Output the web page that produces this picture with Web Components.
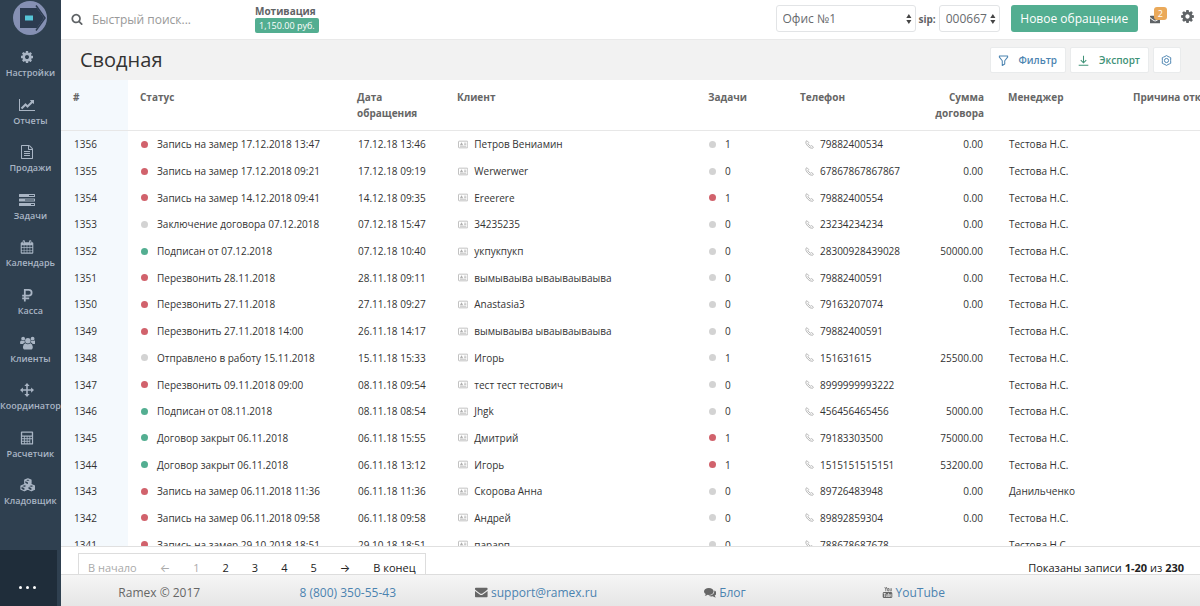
<!DOCTYPE html>
<html lang="ru">
<head>
<meta charset="utf-8">
<title>Сводная</title>
<style>
  html, body { height: 100%; margin: 0; }
  body {
    font-family: "Open Sans", "Noto Sans", "Liberation Sans", sans-serif;
    font-size: 10px;
    color: #333;
    background: #fff;
    --navy: #2f4050;
    --green: #53ae91;
    --blue: #4b83b0;
    --red: #d1626c;
    --grey: #d3d3d3;
    --line: #e7e7e7;
  }
</style>
</head>
<body>
<crm-app></crm-app>

<script>
// ============================================================
// Иконки: <crm-icon name="cog">. Размер задаётся через font-size.
// ============================================================
const ICONS = {
  cog: ['0 0 1792 1792', '<path d="M1152 896q0-106-75-181t-181-75-181 75-75 181 75 181 181 75 181-75 75-181zm512-109v222q0 12-8 23t-20 13l-185 28q-19 54-39 91 35 50 107 138 10 12 10 25t-9 23q-27 37-99 108t-94 71q-12 0-26-9l-138-108q-44 23-91 38-16 136-29 186-7 28-36 28h-222q-14 0-24.5-8.5t-11.5-21.5l-28-184q-49-16-90-37l-141 107q-10 9-25 9-14 0-25-11-126-114-165-168-7-10-7-23 0-12 8-23 15-21 51-66.5t54-70.5q-27-50-41-99l-183-27q-13-2-21-12.5t-8-23.5v-222q0-12 8-23t19-13l186-28q14-46 39-92-40-57-107-138-10-12-10-24 0-10 9-23 26-36 98.5-107.5t94.5-71.5q13 0 26 10l138 107q44-23 91-38 16-136 29-186 7-28 36-28h222q14 0 24.5 8.5t11.5 21.5l28 184q49 16 90 37l142-107q9-9 24-9 13 0 25 10 129 119 165 170 7 8 7 22 0 12-8 23-15 21-51 66.5t-54 70.5q26 50 41 98l183 28q13 2 21 12.5t8 23.5z"/>'],
  chart: ['0 0 2048 1792', '<path d="M2048 1536v128h-2048v-1536h128v1408h1920zm-128-1248v435q0 21-19.5 29.5t-35.5-7.5l-121-121-633 633q-10 10-23 10t-23-10l-233-233-416 416-192-192 585-585q10-10 23-10t23 10l233 233 464-464-121-121q-16-16-7.5-35.5t29.5-19.5h435q14 0 23 9t9 23z"/>'],
  file: ['0 0 1792 1792', '<path d="M1596 380q28 28 48 76t20 88v1152q0 40-28 68t-68 28h-1344q-40 0-68-28t-28-68v-1600q0-40 28-68t68-28h896q40 0 88 20t76 48zm-444-244v376h376q-10-29-22-41l-313-313q-12-12-41-22zm384 1528v-1024h-416q-40 0-68-28t-28-68v-416h-768v1536h1280zm-1024-864q0-14 9-23t23-9h704q14 0 23 9t9 23v64q0 14-9 23t-23 9h-704q-14 0-23-9t-9-23v-64zm736 224q14 0 23 9t9 23v64q0 14-9 23t-23 9h-704q-14 0-23-9t-9-23v-64q0-14 9-23t23-9h704zm0 256q14 0 23 9t9 23v64q0 14-9 23t-23 9h-704q-14 0-23-9t-9-23v-64q0-14 9-23t23-9h704z"/>'],
  search: ['0 0 1792 1792', '<path d="M1216 832q0-185-131.5-316.5t-316.5-131.5-316.5 131.5-131.5 316.5 131.5 316.5 316.5 131.5 316.5-131.5 131.5-316.5zm512 832q0 52-38 90t-90 38q-54 0-90-38l-343-342q-179 124-399 124-143 0-273.5-55.5t-225-150-150-225-55.5-273.5 55.5-273.5 150-225 225-150 273.5-55.5 273.5 55.5 225 150 150 225 55.5 273.5q0 220-124 399l343 343q37 37 37 90z"/>'],
  tasks: ['0 0 16 14', '<path fill-rule="evenodd" d="M.5 1h15q.5 0 .5.5v2q0 .5-.5.5H.5Q0 4 0 3.500v-2Q0 1 .5 1zM10 2v1h5V2zM.5 5.500h15q.5 0 .5.5v2q0 .5-.5.5H.5Q0 8.500 0 8V6q0-.5.5-.5zM6 6.500v1h9v-1zM.5 10h15q.5 0 .5.500v2q0 .5-.5.5H.5q-.5 0-.5-.5v-2q0-.5.5-.5zM12 11v1h3v-1z"/>'],
  calendar: ['0 0 16 16', '<path fill-rule="evenodd" d="M2 2.500h1V1.300Q3 .3 4 .3h.6q1 0 1 1v1.200h4.800V1.300q0-1 1-1h.6q1 0 1 1v1.200h1q1.200 0 1.200 1.200v10.800q0 1.200-1.200 1.200H2q-1.200 0-1.200-1.200V3.700Q.8 2.500 2 2.500zM2 6v2.300h2.300V6zM5 6v2.300h2.600V6zM8.400 6v2.300H11V6zM11.700 6v2.300H14V6zM2 9v2.300h2.300V9zM5 9v2.300h2.600V9zM8.400 9v2.300H11V9zM11.700 9v2.300H14V9zM2 12v2.300h2.300V12zM5 12v2.300h2.600V12zM8.400 12v2.300H11V12zM11.700 12v2.300H14V12zM4 1.300v2.400h.6V1.300zM11.400 1.300v2.400h.6V1.300z"/>'],
  ruble: ['0 0 16 16', '<path fill="none" stroke="currentColor" stroke-width="2" d="M5.500 15.500V2H10q3.300 0 3.300 3.300T10 8.600H2.500M2.500 11.800h8"/>'],
  users: ['0 0 18 16', '<circle cx="9" cy="5.500" r="3.100"/><circle cx="3.600" cy="3" r="2.200"/><circle cx="14.400" cy="3" r="2.200"/><path d="M4.200 15q-1-.8-.8-2.600.3-3.600 2.700-4.200Q9 10.500 11.900 8.200q2.400.6 2.700 4.200.2 1.800-.8 2.600-.6.500-1.300.5h-7q-.7 0-1.300-.5zM0 8.200Q0 5.300 1.400 5q2 1.400 3.800.3.100 1.400.8 2.200-1.500.1-2.500 1.500H1Q0 9 0 8.200zM18 8.200Q18 5.300 16.600 5q-2 1.400-3.800.3-.1 1.400-.8 2.200 1.500.1 2.500 1.500H17q1 0 1-.8z"/>'],
  arrows: ['0 0 16 16', '<path d="M8 0l3 3.300H8.900v3.800h3.800V5L16 8l-3.300 3V8.900H8.900v3.800H11L8 16l-3-3.300h2.100V8.900H3.300V11L0 8l3.300-3v2.100h3.800V3.300H5z"/>'],
  calc: ['0 0 16 16', '<path fill-rule="evenodd" d="M2 .5h12q1 0 1 1v13q0 1-1 1H2q-1 0-1-1v-13q0-1 1-1zM2.500 2v3h11V2zM2.300 6.500v1.800h2.200V6.500zM5.500 6.500v1.800h2.200V6.500zM8.600 6.500v1.800h2.200V6.500zM11.700 6.500v1.800h2V6.500zM2.300 9.400v1.800h2.200V9.400zM5.500 9.400v1.800h2.200V9.400zM8.600 9.400v1.800h2.200V9.400zM2.300 12.300v1.800h2.200v-1.800zM5.500 12.300v1.800h2.200v-1.800zM8.600 12.300v1.800h2.200v-1.800zM11.700 9.400v4.700h2V9.400z"/>'],
  cubes: ['0 0 18 16', '<g fill="none" stroke="currentColor" stroke-width="1.400" stroke-linejoin="round"><path d="M9 1l3.600 1.500v3.700L9 7.800 5.400 6.200V2.500zM5.400 2.600L9 4.200l3.600-1.600M5 7.500l3.700 1.600v3.800L5 14.600l-3.900-1.700V9.100zM1.100 9.200L5 10.800l3.700-1.600M13 7.500l3.900 1.600v3.800L13 14.600l-3.900-1.700V9.100zM9.100 9.200l3.900 1.600 3.900-1.600"/></g><path d="M9 4.200l3.600-1.600v3.600L9 7.800zM5 10.800l3.700-1.600v3.700L5 14.600zM13 10.800l3.900-1.600v3.700L13 14.600z"/>'],
  envelope: ['0 0 16 14', '<path d="M0 3.200V2q0-1 1-1h14q1 0 1 1v1.200Q14 5 9.400 8.200q-1.400 1-2.800 0Q2 5 0 3.200zM0 5q2 1.700 6 4.400 2 1.300 4 0Q14 6.700 16 5v7q0 1-1 1H1q-1 0-1-1z"/>'],
  comments: ['0 0 18 16', '<path d="M7 1.500c3.900 0 7 2.200 7 5s-3.100 5-7 5q-.9 0-1.700-.2Q3.500 12.600 1.300 12.800q-.5-.1 0-.6 1-.9 1.200-2Q0 8.800 0 6.500c0-2.800 3.100-5 7-5z"/><path d="M15.200 5q2.800 1.500 2.800 3.900 0 2.200-2.400 3.600.2 1.100 1.200 2 .5.500 0 .6-2.300-.2-4-1.500-3.600.6-6.200-1.200Q15 12.300 15.200 5z"/>'],
  youtube: ['0 0 16 16', '<path d="M3.500 0h1.200l.8 2.500L6.300 0h1.200L6.100 3.800V6.300H5V3.800zM9 1.600q1.500 0 1.500 1.500v1.800q0 1.500-1.500 1.500T7.500 4.900V3.100Q7.500 1.600 9 1.600zm0 1q-.5 0-.5.500v1.800q0 .6.500.6t.5-.6V3.100q0-.5-.5-.5zM11.200 1.700h1v3.600q.4.300.8-.2V1.700h1v4.600h-1v-.5q-1.800 1.400-1.800-.2z"/><path fill-rule="evenodd" d="M3 7.300h10q2 0 2 2V14q0 2-2 2H3q-2 0-2-2V9.300q0-2 2-2zM2.300 8.700v1h1.100v4.900h1V9.700h1.100v-1zM5.500 10.400v3.400q.2 1.400 1.700.4v.4h.9v-4.200h-.9v3.200q-.5.500-.8.100v-3.300zM9 8.700v5.900h.9v-.4q1.500 1 1.800-.6v-2q-.3-1.800-1.800-.8V8.700zM9.900 11.700q.5-.6.900 0v1.800q-.4.500-.9 0zM12.300 11.600v2q.3 1.300 1.300 1.200V9.900q-1 0-1.300 1.700z"/>'],
  filter: ['0 0 16 16', '<path fill="none" stroke="currentColor" stroke-width="1.500" stroke-linejoin="round" d="M2 1.500h12v1.600L9.800 8.300v4.900l-3.600 2V8.300L2 3.100z"/>'],
  download: ['0 0 16 16', '<path fill="none" stroke="currentColor" stroke-width="1.500" d="M8 1v10M4 7.300l4 4 4-4M1 14.800h14"/>'],
  hexnut: ['0 0 16 16', '<g fill="none" stroke="currentColor" stroke-width="1.400" stroke-linejoin="round"><path d="M8 .8l2.200 1.400 2.200.9 1.800.9-.2 4 .2 4-1.800.9-2.200.9L8 15.200l-2.200-1.400-2.200-.9-1.800-.9.2-4-.2-4 1.800-.9 2.200-.9z"/><circle cx="8" cy="8" r="3"/></g>'],
  card: ['0 0 16 14', '<g fill="none" stroke="currentColor" stroke-width="1.200"><rect x=".8" y="1.800" width="14.400" height="10.400" rx="1"/><path d="M9.500 5H13M9.500 7.200H13M3 9.700h10"/></g><path d="M3 8.300q0-1.600 1.400-1.900Q3.800 4 5.500 4t1.100 2.400Q8 6.700 8 8.300z"/>'],
  phone: ['0 0 16 16', '<path fill="none" stroke="currentColor" stroke-width="1.600" stroke-linejoin="round" d="M3.600 1.200L1.500 2.700q-.8 3.500 3.300 8t8.500 4q1-.5 1.700-2.200L11.700 10l-2 1Q6.500 9.300 5.300 6.200l1.300-1.600z"/>'],
  updown: ['0 0 8 14', '<path d="M4 0l3.600 5.500H.4zM4 14L.4 8.500h7.200z"/>']
};

class CrmIcon extends HTMLElement {
  connectedCallback() {
    const [box, body] = ICONS[this.getAttribute('name')];
    this.attachShadow({ mode: 'open' }).innerHTML = `
      <style>
        :host { display: inline-flex; flex: none; }
        svg { display: block; height: 1em; width: auto; fill: currentColor; }
      </style>
      <svg viewBox="${box}" aria-hidden="true">${body}</svg>`;
  }
}
customElements.define('crm-icon', CrmIcon);

// ============================================================
// Боковое меню
// ============================================================
class CrmSidebar extends HTMLElement {
  connectedCallback() {
    const items = [
      ['cog', 'Настройки'], ['chart', 'Отчеты'], ['file', 'Продажи'],
      ['tasks', 'Задачи'], ['calendar', 'Календарь'], ['ruble', 'Касса'],
      ['users', 'Клиенты'], ['arrows', 'Координатор'],
      ['calc', 'Расчетчик'], ['cubes', 'Кладовщик']
    ];
    this.attachShadow({ mode: 'open' }).innerHTML = `
      <style>
        :host {
          display: flex;
          flex-direction: column;
          width: 61px;
          background: var(--navy);
          color: #a9b5c4;
          overflow: hidden;
        }
        .logo { display: flex; justify-content: center; height: 40px; padding-right: 2px; }
        .logo svg { width: 36px; height: 36px; }
        nav {
          flex: 1;
          display: grid;
          grid-auto-rows: 1fr;
          padding: 10px 2px 24px 0;
        }
        a {
          display: flex;
          flex-direction: column;
          align-items: center;
          gap: 2px;
          color: inherit;
          text-decoration: none;
          font-size: 9px;
          font-weight: 600;
          line-height: 14px;
          white-space: nowrap;
        }
        crm-icon { font-size: 14px; padding-right: 6px; }
        button {
          height: 56px;
          margin-right: 4px;
          border: 0;
          padding: 18px 2px 0 0;
          background: #1f2d3a;
          display: flex;
          align-items: center;
          justify-content: center;
          gap: 4px;
        }
        i { width: 3px; height: 3px; border-radius: 50%; background: #fff; }
      </style>
      <div class="logo">
        <svg viewBox="0 0 36 36" role="img" aria-label="Ramex">
          <circle cx="18" cy="18" r="17" fill="#8590b3"/>
          <path d="M8 8h17l7 10-7 10H8z" fill="#2c3b50"/>
          <path d="M24 5.500L33 18 24 30.500" fill="none" stroke="#2c3b50" stroke-width="1.500"/>
          <path d="M13 15.500h8v5h-8z" fill="#56c5d8"/>
        </svg>
      </div>
      <nav>${items.map(([icon, text]) => `
        <a href="#"><crm-icon name="${icon}"></crm-icon><span>${text}</span></a>`).join('')}
      </nav>
      <button type="button" aria-label="Ещё"><i></i><i></i><i></i></button>`;
  }
}
customElements.define('crm-sidebar', CrmSidebar);

// Выпадающий список со стрелками; значение передаётся атрибутом value
class CrmSelect extends HTMLElement {
  connectedCallback() {
    this.attachShadow({ mode: 'open' }).innerHTML = `
      <style>
        :host { display: grid; align-items: center; }
        select, crm-icon { grid-area: 1 / 1; }
        select {
          appearance: none;
          box-sizing: border-box;
          width: 100%;
          height: 27px;
          border: 1px solid #e2e4e6;
          border-radius: 3px;
          padding: 0 6px;
          background: #fff;
          color: #686b6e;
          font: inherit;
          font-size: 12px;
        }
        crm-icon {
          justify-self: end;
          margin-right: 4px;
          font-size: 10px;
          color: #444;
          pointer-events: none;
        }
      </style>
      <select aria-label="${this.getAttribute('label')}"><option>${this.getAttribute('value')}</option></select>
      <crm-icon name="updown"></crm-icon>`;
  }
}
customElements.define('crm-select', CrmSelect);

// ============================================================
// Верхняя панель
// ============================================================
class CrmTopbar extends HTMLElement {
  connectedCallback() {
    this.attachShadow({ mode: 'open' }).innerHTML = `
      <style>
        :host {
          display: flex;
          align-items: flex-start;
          box-sizing: border-box;
          height: 39px;
          padding: 5px 5px 0 10px;
          background: #fff;
          color: #5f6366;
        }
        .search { display: flex; align-items: center; gap: 9px; height: 28px; width: 184px; }
        .search crm-icon { font-size: 12px; }
        input {
          flex: 1;
          min-width: 0;
          border: 0;
          padding: 0;
          background: none;
          outline: 0;
          font: inherit;
          font-size: 12px;
          color: inherit;
        }
        input::placeholder { color: #999; opacity: 1; }
        .bonus { display: flex; flex-direction: column; align-items: flex-start; gap: 1px; }
        .bonus b { font-size: 10px; line-height: 12px; }
        .bonus span {
          padding: 0 4px;
          border-radius: 2px;
          background: var(--green);
          color: #fff;
          font-size: 9px;
          line-height: 15px;
        }
        .tools { display: flex; align-items: center; margin-left: auto; height: 27px; }
        .office { width: 140px; }
        .sip { width: 61px; }
        .tools b { padding: 0 3px; font-size: 10px; }
        button { border: 0; padding: 0; background: none; color: inherit; font: inherit; }
        .new {
          width: 127px;
          height: 27px;
          margin: 0 12px 0 11px;
          border-radius: 3px;
          background: var(--green);
          color: #fff;
          font-size: 12px;
        }
        .mail { position: relative; display: flex; padding-top: 2px; margin-right: 20px; }
        .mail crm-icon { font-size: 9px; }
        .mail span {
          position: absolute;
          left: 4px;
          bottom: 4px;
          padding: 0 4px;
          border-radius: 3px;
          background: #eaa95a;
          color: #fff;
          font-size: 9px;
          line-height: 13px;
        }
        .cog { display: flex; padding-bottom: 4px; }
        .cog crm-icon { font-size: 15px; }
      </style>
      <label class="search">
        <crm-icon name="search"></crm-icon>
        <input type="search" placeholder="Быстрый поиск..." aria-label="Быстрый поиск">
      </label>
      <div class="bonus"><b>Мотивация</b><span>1,150.00 руб.</span></div>
      <div class="tools">
        <crm-select class="office" label="Офис" value="Офис №1"></crm-select>
        <b>sip:</b>
        <crm-select class="sip" label="sip" value="000667"></crm-select>
        <button class="new" type="button">Новое обращение</button>
        <button class="mail" type="button" aria-label="Сообщения"><crm-icon name="envelope"></crm-icon><span>2</span></button>
        <button class="cog" type="button" aria-label="Параметры"><crm-icon name="cog"></crm-icon></button>
      </div>`;
  }
}
customElements.define('crm-topbar', CrmTopbar);

// Заголовок страницы, кнопки передаются через slot
class CrmHeading extends HTMLElement {
  connectedCallback() {
    this.attachShadow({ mode: 'open' }).innerHTML = `
      <style>
        :host {
          display: flex;
          align-items: center;
          justify-content: space-between;
          box-sizing: border-box;
          height: 41px;
          padding: 0 19px;
          border-top: 1px solid #e9e9e9;
          background: #f2f2f2;
        }
        h1 { margin: 0; font-size: 20px; font-weight: 400; line-height: 28px; color: #333; }
        div { display: flex; gap: 4px; }
      </style>
      <h1>${this.getAttribute('text')}</h1>
      <div><slot></slot></div>`;
  }
}
customElements.define('crm-heading', CrmHeading);

class CrmAction extends HTMLElement {
  connectedCallback() {
    this.attachShadow({ mode: 'open' }).innerHTML = `
      <style>
        :host { display: block; }
        button {
          display: flex;
          align-items: center;
          gap: 10px;
          height: 26px;
          border: 1px solid #e9ebec;
          border-radius: 2px;
          padding: 0 8px 0 7px;
          background: #fff;
          color: inherit;
          font: inherit;
          font-size: 10px;
          font-weight: 600;
        }
        crm-icon { font-size: 11px; }
      </style>
      <button type="button" aria-label="${this.getAttribute('label')}">
        <crm-icon name="${this.getAttribute('icon')}"></crm-icon><slot></slot>
      </button>`;
  }
}
customElements.define('crm-action', CrmAction);

// ============================================================
// Таблица обращений
// Строка: номер, цвет, статус, дата, клиент, цвет задач, задачи,
// телефон, сумма, менеджер
// ============================================================
const ROWS = [
  [1356, 'red', 'Запись на замер 17.12.2018 13:47', '17.12.18 13:46', 'Петров Вениамин', 'grey', 1, '79882400534', '0.00', 'Тестова Н.С.'],
  [1355, 'red', 'Запись на замер 17.12.2018 09:21', '17.12.18 09:19', 'Werwerwer', 'grey', 0, '67867867867867', '0.00', 'Тестова Н.С.'],
  [1354, 'red', 'Запись на замер 14.12.2018 09:41', '14.12.18 09:35', 'Ereerere', 'red', 1, '79882400554', '0.00', 'Тестова Н.С.'],
  [1353, 'grey', 'Заключение договора 07.12.2018', '07.12.18 15:47', '34235235', 'grey', 0, '23234234234', '0.00', 'Тестова Н.С.'],
  [1352, 'green', 'Подписан от 07.12.2018', '07.12.18 10:40', 'укпукпукп', 'grey', 0, '28300928439028', '50000.00', 'Тестова Н.С.'],
  [1351, 'red', 'Перезвонить 28.11.2018', '28.11.18 09:11', 'вымываыва ываываываыва', 'grey', 0, '79882400591', '0.00', 'Тестова Н.С.'],
  [1350, 'red', 'Перезвонить 27.11.2018', '27.11.18 09:27', 'Anastasia3', 'grey', 0, '79163207074', '0.00', 'Тестова Н.С.'],
  [1349, 'red', 'Перезвонить 27.11.2018 14:00', '26.11.18 14:17', 'вымываыва ываываываыва', 'grey', 0, '79882400591', '', 'Тестова Н.С.'],
  [1348, 'grey', 'Отправлено в работу 15.11.2018', '15.11.18 15:33', 'Игорь', 'grey', 1, '151631615', '25500.00', 'Тестова Н.С.'],
  [1347, 'red', 'Перезвонить 09.11.2018 09:00', '08.11.18 09:54', 'тест тест тестович', 'grey', 0, '8999999993222', '', 'Тестова Н.С.'],
  [1346, 'green', 'Подписан от 08.11.2018', '08.11.18 08:54', 'Jhgk', 'grey', 0, '456456465456', '5000.00', 'Тестова Н.С.'],
  [1345, 'green', 'Договор закрыт 06.11.2018', '06.11.18 15:55', 'Дмитрий', 'red', 1, '79183303500', '75000.00', 'Тестова Н.С.'],
  [1344, 'green', 'Договор закрыт 06.11.2018', '06.11.18 13:12', 'Игорь', 'red', 1, '1515151515151', '53200.00', 'Тестова Н.С.'],
  [1343, 'red', 'Запись на замер 06.11.2018 11:36', '06.11.18 11:36', 'Скорова Анна', 'grey', 0, '89726483948', '0.00', 'Данильченко'],
  [1342, 'red', 'Запись на замер 06.11.2018 09:58', '06.11.18 09:58', 'Андрей', 'grey', 0, '89892859304', '0.00', 'Тестова Н.С.'],
  [1341, 'red', 'Запись на замер 29.10.2018 18:51', '29.10.18 18:51', 'парарп', 'grey', 0, '788678687678', '', 'Тестова Н.С.']
];

class CrmTable extends HTMLElement {
  connectedCallback() {
    const rows = ROWS.map(([id, color, status, date, client, taskColor, tasks, phone, sum, manager]) => `
      <tr>
        <td>${id}</td>
        <td><span class="cell"><i class="${color}"></i>${status}</span></td>
        <td>${date}</td>
        <td><span class="cell tight"><crm-icon name="card"></crm-icon>${client}</span></td>
        <td><span class="cell"><i class="${taskColor}"></i>${tasks}</span></td>
        <td class="phone"><span class="cell tight"><crm-icon name="phone"></crm-icon>${phone}</span></td>
        <td class="sum">${sum}</td>
        <td>${manager}</td>
        <td></td>
      </tr>`).join('');

    this.attachShadow({ mode: 'open' }).innerHTML = `
      <style>
        :host { display: block; overflow: hidden; background: #fff; }
        table {
          table-layout: fixed;
          width: 100%;
          min-width: 1240px;
          height: 478px;
          border-collapse: separate;
          border-spacing: 0;
        }
        th {
          box-sizing: border-box;
          height: 51px;
          padding: 9px 12px;
          border-bottom: 1px solid var(--line);
          text-align: left;
          vertical-align: top;
          font-size: 10px;
          font-weight: 700;
          line-height: 16px;
          color: #666;
        }
        td { padding: 0 13px; line-height: 16px; white-space: nowrap; }
        tr > :first-child { background: #f4f9fd; }
        .sum { text-align: right; }
        .phone { padding-left: 17px; padding-right: 0; }
        .cell { display: flex; align-items: center; gap: 9px; }
        .tight { gap: 6px; }
        i { width: 7px; height: 7px; border-radius: 50%; }
        .red { background: var(--red); }
        .green { background: var(--green); }
        .grey { background: var(--grey); }
        crm-icon { color: #b0b0b0; font-size: 9px; }
      </style>
      <table>
        <colgroup>
          <col style="width: 67px"><col style="width: 217px"><col style="width: 100px">
          <col style="width: 251px"><col style="width: 92px"><col style="width: 118px">
          <col style="width: 90px"><col style="width: 125px"><col>
        </colgroup>
        <thead>
          <tr>
            <th>#</th><th>Статус</th><th>Дата обращения</th><th>Клиент</th><th>Задачи</th>
            <th>Телефон</th><th class="sum">Сумма договора</th><th>Менеджер</th><th>Причина отказа</th>
          </tr>
        </thead>
        <tbody>${rows}</tbody>
      </table>`;
  }
}
customElements.define('crm-table', CrmTable);

// ============================================================
// Постраничная навигация
// ============================================================
class CrmPager extends HTMLElement {
  connectedCallback() {
    this.attachShadow({ mode: 'open' }).innerHTML = `
      <style>
        :host {
          display: flex;
          align-items: flex-start;
          justify-content: space-between;
          box-sizing: border-box;
          height: 28px;
          padding: 6px 16px 0 17px;
          border-top: 1px solid #e0e0e0;
          overflow: hidden;
          background: #fff;
          color: #222;
          font-size: 11px;
        }
        nav {
          display: flex;
          gap: 23px;
          border: 1px solid #ddd;
          padding: 0 9px;
        }
        button {
          border: 0;
          padding: 0;
          background: none;
          color: inherit;
          font: inherit;
          line-height: 28px;
        }
        button:disabled { color: #aaa; }
        .arrow { font-family: "Inter", "DejaVu Sans", sans-serif; }
        p { margin: 0; line-height: 30px; }
      </style>
      <nav aria-label="Страницы">
        <button type="button" disabled>В начало</button>
        <button class="arrow" type="button" disabled>←</button>
        <button type="button" disabled>1</button>
        <button type="button">2</button>
        <button type="button">3</button>
        <button type="button">4</button>
        <button type="button">5</button>
        <button class="arrow" type="button">→</button>
        <button type="button">В конец</button>
      </nav>
      <p>Показаны записи <b>1-20</b> из <b>230</b></p>`;
  }
}
customElements.define('crm-pager', CrmPager);

class CrmFooter extends HTMLElement {
  connectedCallback() {
    this.attachShadow({ mode: 'open' }).innerHTML = `
      <style>
        :host {
          display: grid;
          grid-template-columns: repeat(6, 1fr);
          align-items: center;
          justify-items: center;
          box-sizing: border-box;
          height: 32px;
          padding: 3px 4px 0;
          border-top: 1px solid #ddd;
          background: linear-gradient(#f5f5f5, #e6e6e6);
          color: #666;
          font-size: 12px;
        }
        span { display: flex; align-items: center; gap: 3px; }
        a { color: var(--blue); text-decoration: none; }
        crm-icon { font-size: 11px; }
      </style>
      <span>Ramex © 2017</span>
      <a href="#">8 (800) 350-55-43</a>
      <span><crm-icon name="envelope"></crm-icon><a href="#">support@ramex.ru</a></span>
      <span><crm-icon name="comments"></crm-icon><a href="#">Блог</a></span>
      <span><crm-icon name="youtube"></crm-icon><a href="#">YouTube</a></span>`;
  }
}
customElements.define('crm-footer', CrmFooter);

// Каркас приложения
class CrmApp extends HTMLElement {
  connectedCallback() {
    this.attachShadow({ mode: 'open' }).innerHTML = `
      <style>
        :host { display: flex; height: 100vh; }
        main { flex: 1; min-width: 0; display: flex; flex-direction: column; }
        crm-table { flex: 1; min-height: 0; }
        .filter, .setup { color: var(--blue); }
        .export { color: #3f9277; }
      </style>
      <crm-sidebar></crm-sidebar>
      <main>
        <crm-topbar></crm-topbar>
        <crm-heading text="Сводная">
          <crm-action class="filter" icon="filter" label="Фильтр">Фильтр</crm-action>
          <crm-action class="export" icon="download" label="Экспорт">Экспорт</crm-action>
          <crm-action class="setup" icon="hexnut" label="Настройка таблицы"></crm-action>
        </crm-heading>
        <crm-table></crm-table>
        <crm-pager></crm-pager>
        <crm-footer></crm-footer>
      </main>`;
  }
}
customElements.define('crm-app', CrmApp);
</script>
</body>
</html>
